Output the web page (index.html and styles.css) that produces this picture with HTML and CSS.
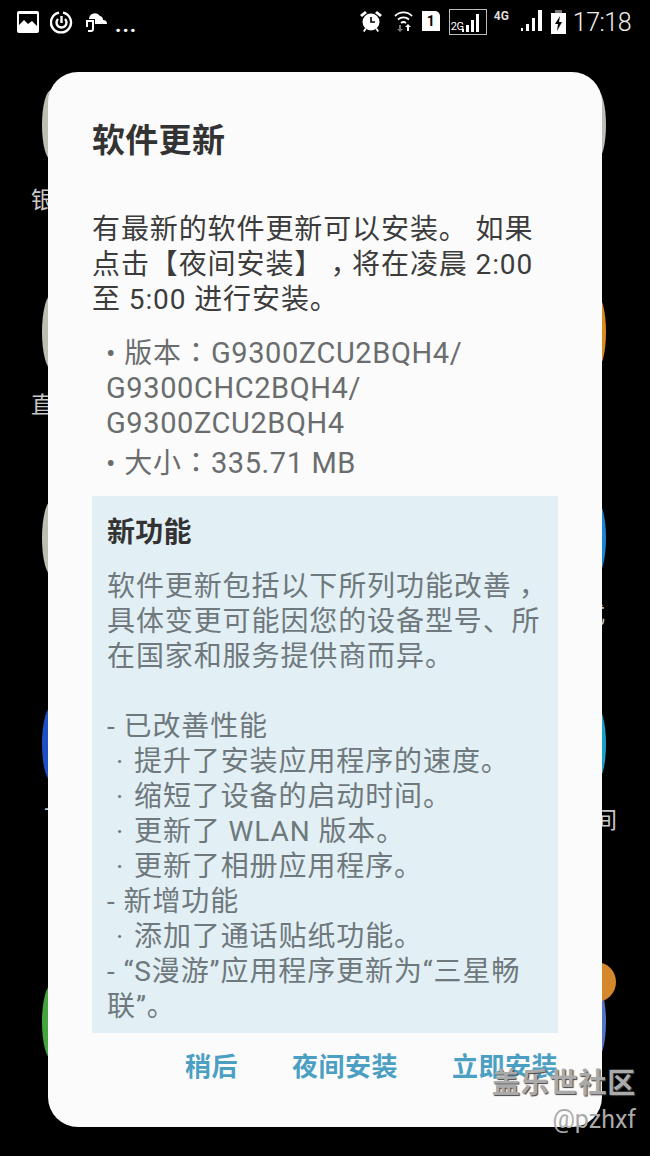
FILE: index.html
```html
<!DOCTYPE html>
<html lang="zh-CN">

<head>
    <meta charset="UTF-8">
    <meta name="viewport" content="width=device-width, initial-scale=1.0">
    <title>软件更新</title>
    <link rel="stylesheet" href="styles.css">
</head>

<body>
    <!-- home screen icons behind the dialog -->
    <div class="home">
        <span class="app app-l silver t1"></span>
        <span class="app app-l silver t2"></span>
        <span class="app app-l silver t3"></span>
        <span class="app app-l blue t4"></span>
        <span class="app app-l green t5"></span>
        <span class="app app-r silver t1"></span>
        <span class="app app-r orange t2"></span>
        <span class="app app-r sky t3"></span>
        <span class="app app-r cyan t4"></span>
        <span class="app app-r indigo t5"></span>
        <span class="badge"></span>
        <span class="label l1">银</span>
        <span class="label l2">直</span>
        <span class="label l3">一</span>
        <span class="label l4">式</span>
        <span class="label l5">间</span>
    </div>

    <header class="status">
        <div class="status-left">
            <svg width="22" height="22" viewBox="0 0 22 22">
                <path fill="#fff" fill-rule="evenodd" d="M2 0h18a2 2 0 0 1 2 2v18a2 2 0 0 1-2 2H2a2 2 0 0 1-2-2V2a2 2 0 0 1 2-2zM2 3v11l5-5 4 4 4-3 5 5V3z" />
            </svg>
            <svg width="23" height="23" viewBox="0 0 23 23" fill="none" stroke="#fff">
                <path stroke-width="2.4" d="M13 1.600a10 10 0 1 1-4 0" />
                <path stroke-width="2.4" d="M8 8a5 5 0 1 0 7 0M11.500 5v7" />
            </svg>
            <svg width="23" height="22" viewBox="0 0 23 22">
                <path fill="#fff" d="M5 8a6 6 0 0 1 11-3 4 4 0 0 1 3 4 4 4 0 0 1 4 4H11V8z" />
                <path fill="none" stroke="#fff" stroke-width="2" d="M3 16V10h6v8a2 2 0 0 1-2 2H4" />
            </svg>
            <span class="more">...</span>
        </div>
        <div class="status-right">
            <svg class="alarm" width="22" height="22" viewBox="0 0 22 22">
                <circle cx="11" cy="12" r="8.5" fill="#fff" />
                <path fill="#fff" d="M0 5l5-4 2 2-5 4zM22 5l-5-4-2 2 5 4zM3 21l2-3 1.500 1-2 3zM19 21l-2-3-1.500 1 2 3z" />
                <path fill="none" stroke="#000" stroke-width="1.600" d="M11 7v5h4" />
            </svg>
            <svg class="wifi" width="19" height="24" viewBox="0 0 19 24">
                <g fill="none" stroke="#fff" stroke-width="1.800">
                    <path d="M1 7a12 12 0 0 1 17 0" />
                    <path d="M4 10.500a8 8 0 0 1 11 0" />
                    <path d="M7 14a4 4 0 0 1 5 0" />
                </g>
                <path fill="#777" d="M5 16h2v4h2l-3 3-3-3h2z" />
                <path fill="#fff" d="M14 15l3 3h-2v4h-2v-4h-2z" />
            </svg>
            <div class="sim">1</div>
            <div class="net">
                <span class="net-label">2G</span>
                <svg width="18" height="20" viewBox="0 0 18 20">
                    <path fill="#fff" d="M0 16h2v3H0zM4 12h3v7H4zM9 7h3v12H9zM14 1h3v18h-3z" />
                </svg>
            </div>
            <span class="lte">4G</span>
            <svg class="signal" width="22" height="23" viewBox="0 0 22 23">
                <path fill="#fff" d="M0 19h2v3H0zM5 15h3v7H5zM11 9h3v13h-3zM17 1h4v21h-4z" />
            </svg>
            <svg class="battery" width="15" height="24" viewBox="0 0 15 24">
                <path fill="#777" d="M4 0h7v3H4z" />
                <path fill="#fff" fill-rule="evenodd" d="M0 3h15v21H0zM9 6L4 14h3l-1 7 5-9H8z" />
            </svg>
            <span class="time">17:18</span>
        </div>
    </header>

    <main class="dialog">
        <h1 class="title">软件更新</h1>
        <p class="intro">有最新的软件更新可以安装。 如果<br>点击【夜间安装】<span class="tc comma" lang="zh-TW">，</span>将在凌晨 2:00<br>至 5:00 进行安装。</p>
        <ul class="info">
            <li>• 版本<span class="tc" lang="zh-TW">：</span><span class="code">G9300ZCU2BQH4/<br>G9300CHC2BQH4/<br>G9300ZCU2BQH4</span></li>
            <li class="size">• 大小<span class="tc" lang="zh-TW">：</span><span class="code">335.71 MB</span></li>
        </ul>
        <section class="notes">
            <h2 class="notes-title">新功能</h2>
            <p>软件更新包括以下所列功能改善<span class="tc comma" lang="zh-TW">，</span><br>具体变更可能因您的设备型号、所<br>在国家和服务提供商而异。</p>
            <p class="gap">- 已改善性能<br>
                <span class="dot">·</span>提升了安装应用程序的速度。<br>
                <span class="dot">·</span>缩短了设备的启动时间。<br>
                <span class="dot">·</span>更新了 WLAN 版本。<br>
                <span class="dot">·</span>更新了相册应用程序。<br>
                - 新增功能<br>
                <span class="dot">·</span>添加了通话贴纸功能。<br>
                - “S漫游”应用程序更新为“三星畅<br>联”。</p>
        </section>
        <div class="actions">
            <a>稍后</a>
            <a>夜间安装</a>
            <a>立即安装</a>
        </div>
    </main>

    <div class="mark">
        <div class="mark-name">盖乐世社区</div>
        <div class="mark-user">@pzhxf</div>
    </div>
</body>

</html>
```

FILE: styles.css
```css
* {
    box-sizing: border-box;
}

html,
body {
    margin: 0;
    height: 100%;
}

body {
    position: relative;
    height: 1156px;
    overflow: hidden;
    background: #000;
    font-family: Roboto, "Noto Sans CJK SC", sans-serif;
}

/* home screen */
.app {
    position: absolute;
    width: 70px;
    height: 76px;
    border-radius: 10px / 38px;
}

.app-l {
    left: 42px;
}

.app-r {
    left: 536px;
}

.t1 {
    top: 90px;
    height: 70px;
}

.t2 {
    top: 294px;
}

.t3 {
    top: 500px;
}

.t4 {
    top: 706px;
}

.t5 {
    top: 984px;
}

.silver {
    background: #bdbdb4;
}

.blue {
    background: #1d50c4;
}

.green {
    background: #43a53c;
}

.orange {
    background: #d98a1f;
}

.sky {
    background: #1b83cf;
}

.cyan {
    background: #18a0c8;
}

.indigo {
    background: #5373c4;
}

.badge {
    position: absolute;
    left: 576px;
    top: 962px;
    width: 40px;
    height: 40px;
    border-radius: 50%;
    background: #d5872c;
}

.label {
    position: absolute;
    font-size: 23px;
    line-height: 30px;
    color: #c8c8c8;
}

.l1 {
    left: 31px;
    top: 186px;
}

.l2 {
    left: 31px;
    top: 391px;
}

.l3 {
    left: 44px;
    top: 796px;
}

.l4 {
    left: 582px;
    top: 600px;
}

.l5 {
    left: 594px;
    top: 806px;
}

/* status bar */
.status {
    position: relative;
    height: 44px;
    padding: 9px 19px 0 17px;
    display: flex;
    justify-content: space-between;
    align-items: flex-start;
    margin-bottom: 28px;
}

.status-left,
.status-right {
    display: flex;
    align-items: flex-start;
}

.status-left {
    gap: 11px;
    padding-top: 2px;
}

.more {
    color: #fff;
    font-size: 22px;
    line-height: 22px;
    letter-spacing: 1px;
    font-weight: 700;
    margin-left: -3px;
    padding-top: 3px;
}

.alarm {
    margin-top: 1px;
}

.wifi {
    margin-left: 12px;
}

.sim {
    width: 18px;
    height: 20px;
    margin: 2px 0 0 9px;
    background: #fff;
    border-top-right-radius: 5px;
    color: #000;
    font-size: 14px;
    font-weight: 700;
    line-height: 20px;
    text-align: center;
}

.net {
    display: flex;
    align-items: flex-end;
    width: 38px;
    height: 26px;
    margin: 0 0 0 9px;
    border: 1px solid #bbb;
    padding: 0 1px 1px 1px;
}

.net-label {
    color: #fff;
    font-size: 11px;
    line-height: 12px;
    letter-spacing: -0.5px;
}

.net svg {
    margin-left: -1px;
}

.lte {
    width: 18px;
    margin-left: 7px;
    color: #ddd;
    font-size: 12px;
    font-weight: 700;
    line-height: 14px;
}

.signal {
    margin-left: 9px;
}

.battery {
    margin-left: 8px;
    margin-top: 1px;
}

.time {
    margin-left: 7px;
    color: #eee;
    font-size: 25px;
    font-weight: 300;
    line-height: 28px;
    letter-spacing: -0.5px;
}

/* dialog */
.dialog {
    position: relative;
    width: 554px;
    height: 1055px;
    margin-left: 48px;
    padding: 48px 44px 0;
    background: #fbfbfb;
    border-radius: 30px;
    font-size: 28px;
    letter-spacing: 0.9px;
    line-height: 35px;
    color: #555;
    text-spacing-trim: space-all;
}

.tc {
    font-family: "Noto Sans CJK TC", sans-serif;
    line-height: 0;
}

.comma {
    vertical-align: -8px;
}

.title {
    margin: 0 0 50px;
    font-size: 33px;
    letter-spacing: 0.3px;
    line-height: 42px;
    font-weight: 700;
    color: #333;
}

.intro {
    margin: 0 0 19px;
    color: #3c3c3c;
}

.info {
    margin: 0 0 15px;
    padding: 0 0 0 14px;
    list-style: none;
    color: #6a6d6e;
}

.code {
    font-size: 29px;
    letter-spacing: 0.6px;
    line-height: 0;
}

.size {
    margin-top: 5px;
}

.notes {
    height: 537px;
    padding: 19px 15px 0;
    background: #e2f0f5;
    color: #6f787c;
}

.notes p {
    margin: 0;
}

.notes-title {
    margin: 0 0 19px;
    font-size: 28px;
    letter-spacing: 0.3px;
    line-height: 35px;
    font-weight: 700;
    color: #333;
}

.notes .gap {
    margin-top: 35px;
}

.dot {
    display: inline-block;
    width: 27px;
    padding-left: 9px;
}

.actions {
    display: flex;
    justify-content: flex-end;
    gap: 54px;
    margin-top: 17px;
    font-size: 26px;
    letter-spacing: 0.5px;
    font-weight: 700;
    color: #4b9fc2;
}

/* watermark */
.mark {
    position: absolute;
    right: 14px;
    top: 1066px;
    text-align: right;
    color: #aaa;
}

.mark-name {
    font-size: 28px;
    letter-spacing: 0.8px;
    line-height: 36px;
    font-weight: 700;
    text-shadow: 1px 1px 1px #444;
}

.mark-user {
    font-size: 25px;
    line-height: 30px;
    margin-top: 3px;
}
```
